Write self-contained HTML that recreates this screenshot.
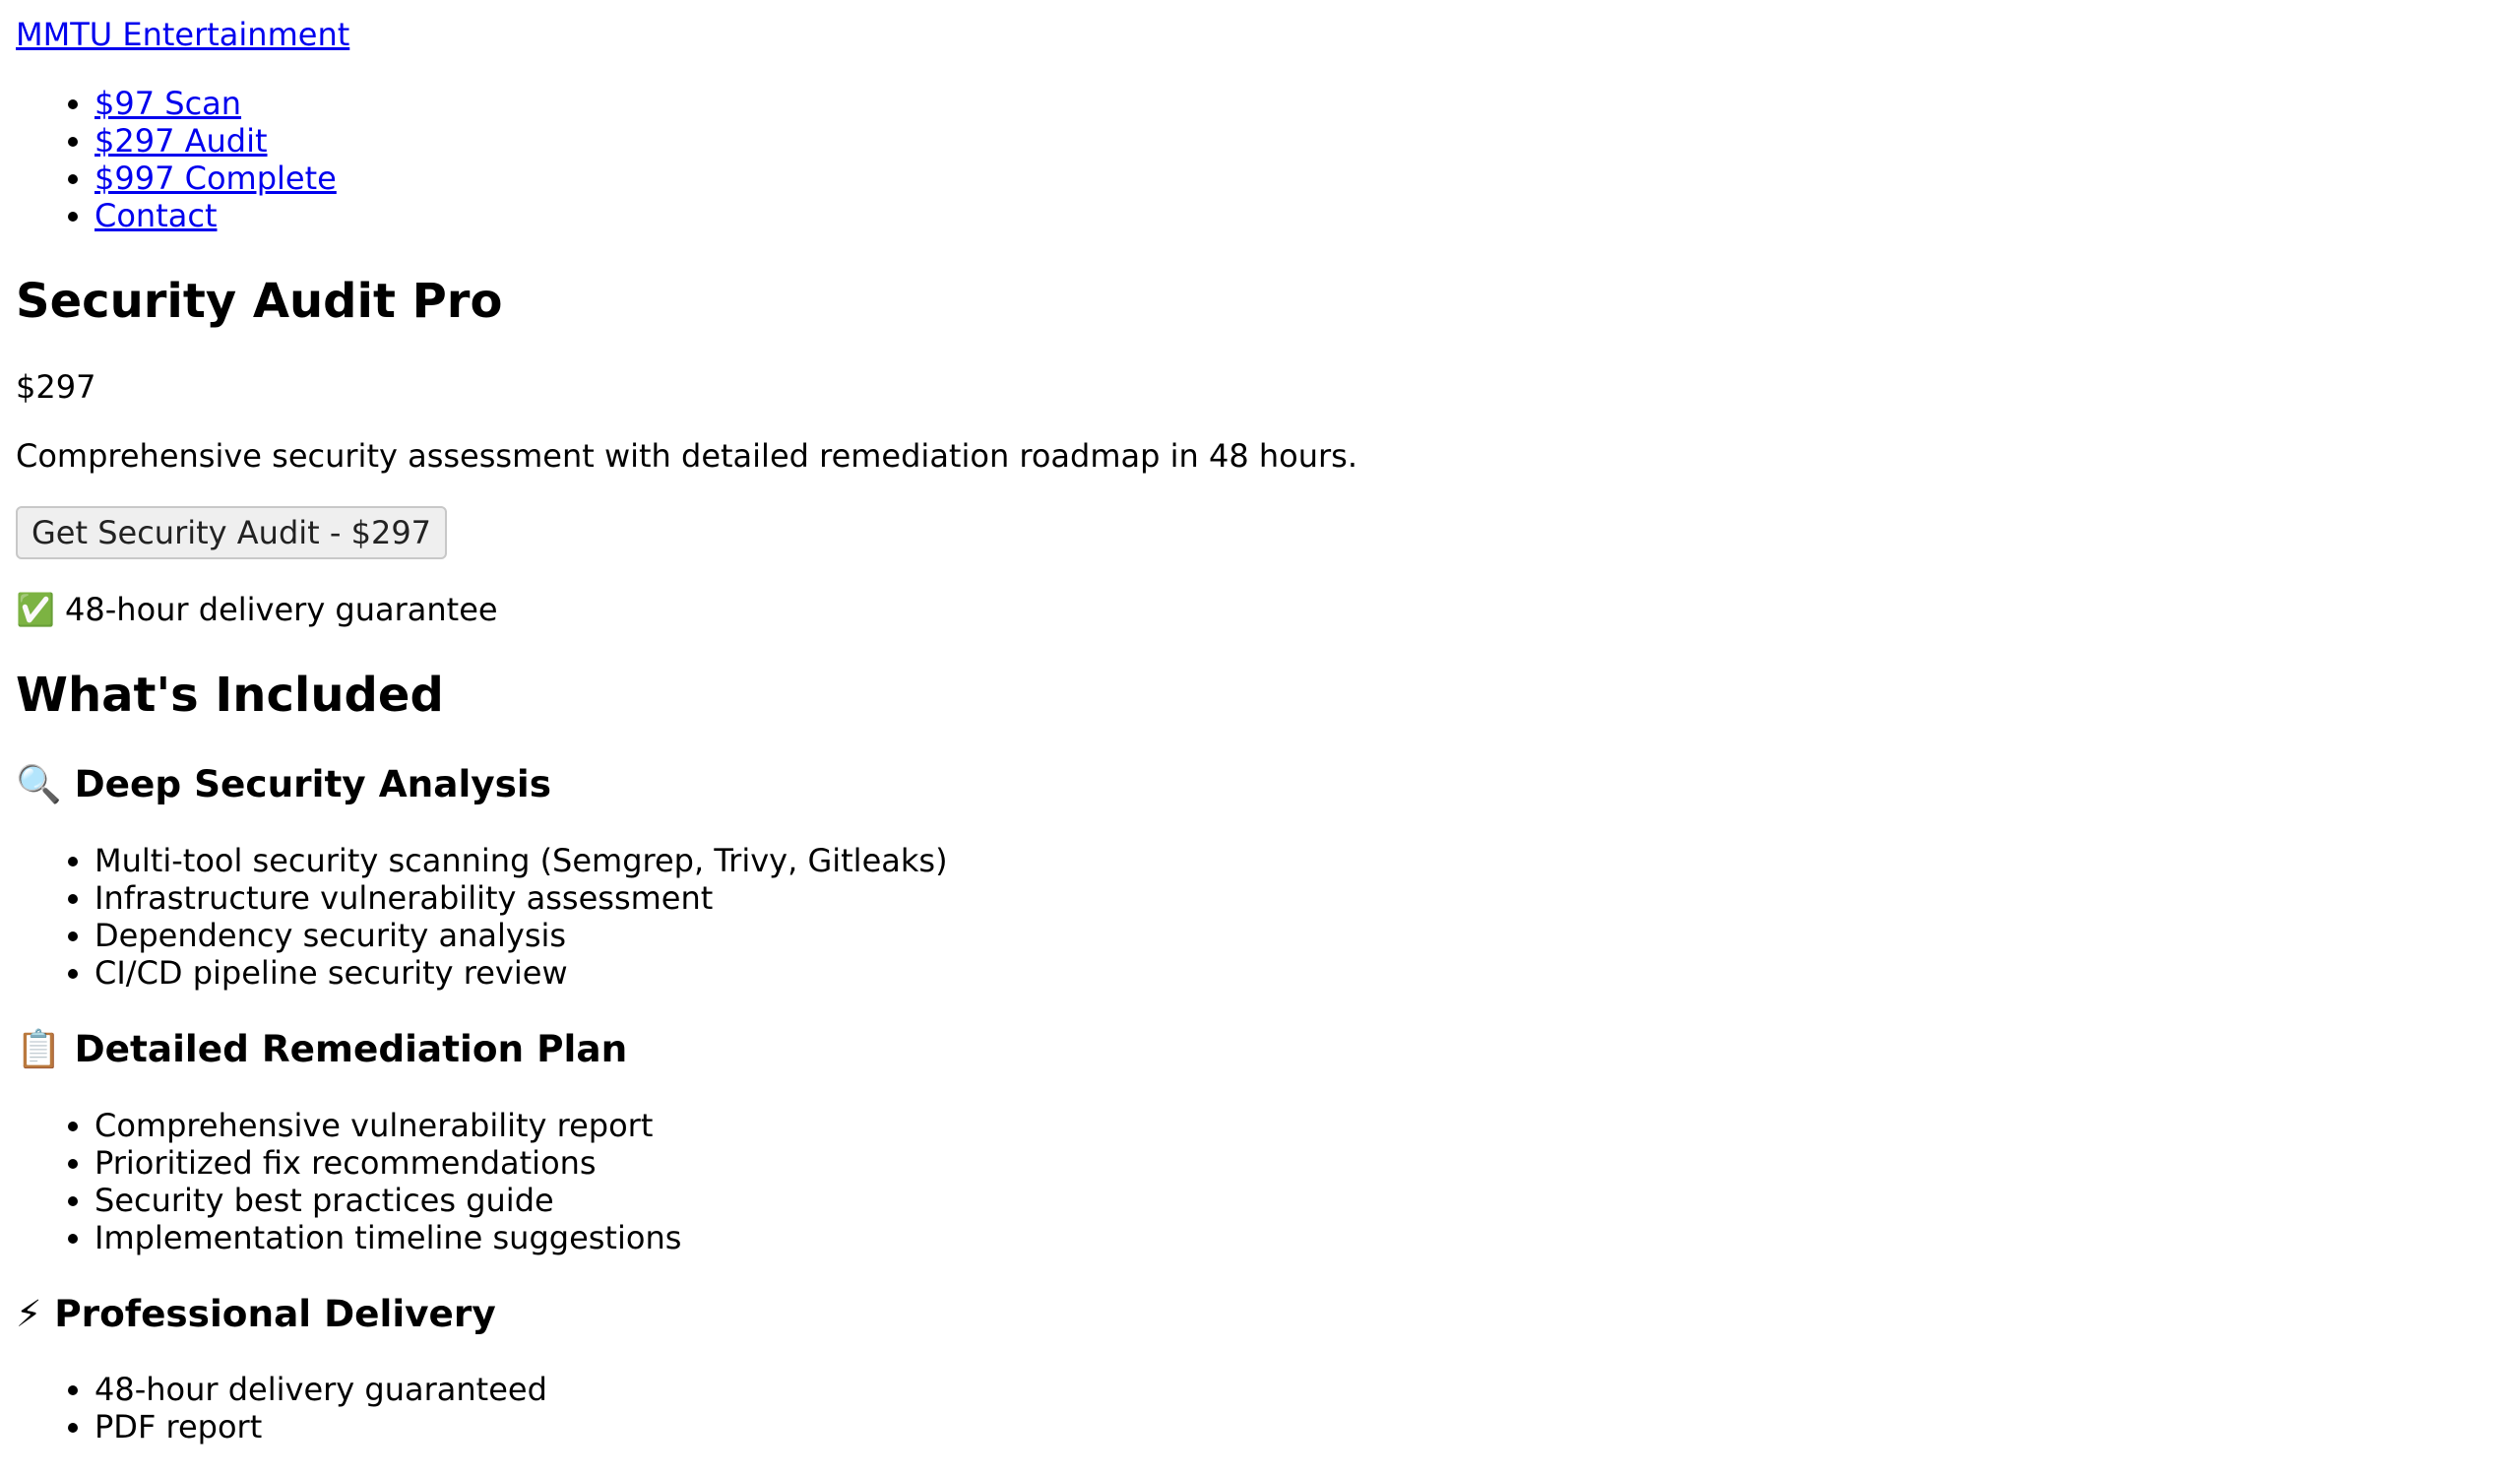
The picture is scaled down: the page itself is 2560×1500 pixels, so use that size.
<!DOCTYPE html>
<html><head><meta charset="utf-8"><style>
html{zoom:2}
body{margin:8px;font-family:"DejaVu Sans","Noto Color Emoji",sans-serif;font-size:16px;color:#000;background:#fff}
a{color:#00e}
button{font-family:inherit;font-size:16px;padding:3px 7px;background:#efefef;border:1px solid #c8c8c8;border-radius:3px;color:#222}
h1{font-size:24px;margin:20px 0}
h2{font-size:24px;margin:20px 0}
h3{font-size:18.7px;margin:18px 0}
ul{margin:16px 0;padding-left:40px}
p{margin:16px 0}
</style></head><body>
<a href="#">MMTU Entertainment</a>
<ul><li><a href="#">$97 Scan</a></li><li><a href="#">$297 Audit</a></li><li><a href="#">$997 Complete</a></li><li><a href="#">Contact</a></li></ul>
<h1>Security Audit Pro</h1>
<p>$297</p>
<p>Comprehensive security assessment with detailed remediation roadmap in 48 hours.</p>
<p><button>Get Security Audit - $297</button></p>
<p>✅ 48-hour delivery guarantee</p>
<h2>What's Included</h2>
<h3>🔍 Deep Security Analysis</h3>
<ul><li>Multi-tool security scanning (Semgrep, Trivy, Gitleaks)</li><li>Infrastructure vulnerability assessment</li><li>Dependency security analysis</li><li>CI/CD pipeline security review</li></ul>
<h3>📋 Detailed Remediation Plan</h3>
<ul><li>Comprehensive vulnerability report</li><li>Prioritized fix recommendations</li><li>Security best practices guide</li><li>Implementation timeline suggestions</li></ul>
<h3>⚡ Professional Delivery</h3>
<ul><li>48-hour delivery guaranteed</li><li>PDF report</li></ul>
</body></html>
